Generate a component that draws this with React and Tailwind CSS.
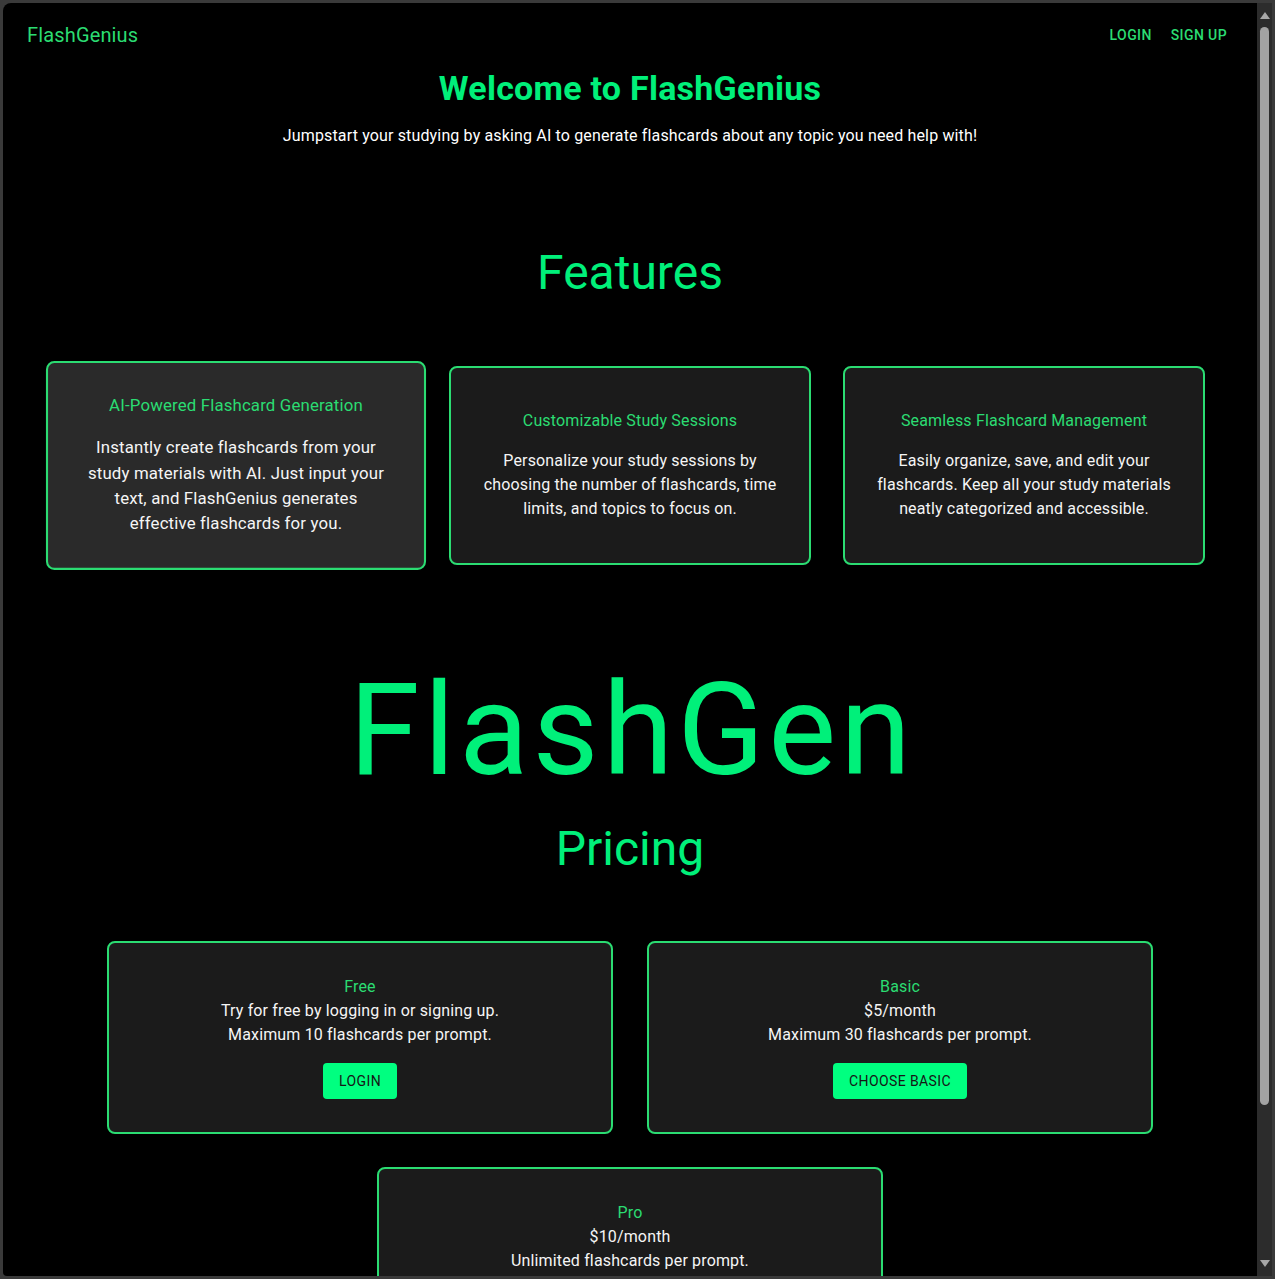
import React from "react";

const features = [
  {
    title: "AI-Powered Flashcard Generation",
    body: "Instantly create flashcards from your study materials with AI. Just input your text, and FlashGenius generates effective flashcards for you.",
    active: true,
  },
  {
    title: "Customizable Study Sessions",
    body: "Personalize your study sessions by choosing the number of flashcards, time limits, and topics to focus on.",
  },
  {
    title: "Seamless Flashcard Management",
    body: "Easily organize, save, and edit your flashcards. Keep all your study materials neatly categorized and accessible.",
  },
];

const plans = [
  { name: "Free", lines: ["Try for free by logging in or signing up.", "Maximum 10 flashcards per prompt."], cta: "Login" },
  { name: "Basic", lines: ["$5/month", "Maximum 30 flashcards per prompt."], cta: "Choose Basic" },
  { name: "Pro", lines: ["$10/month", "Unlimited flashcards per prompt."], cta: "Choose Pro" },
];

const FeatureCard = ({ title, body, active }) => (
  <div
    className={`h-[199px] w-[362px] rounded-lg border-2 border-[#2bdc72] px-8 pb-[2px] flex flex-col justify-center text-center ${
      active ? "bg-[#2a2a2a] scale-105" : "bg-[#1b1b1b]"
    }`}
  >
    <h3 className="text-base leading-6 tracking-[0.15px] text-[#2bdc72]">{title}</h3>
    <p className="mt-4 text-base leading-6 tracking-[0.15px] text-[#f5f5f5]">{body}</p>
  </div>
);

const PlanCard = ({ name, lines, cta }) => (
  <div className="w-[506px] shrink-0 rounded-lg border-2 border-[#2bdc72] bg-[#1b1b1b] pt-8 pb-[33px] flex flex-col items-center text-center">
    <h3 className="text-base leading-6 tracking-[0.15px] text-[#2bdc72]">{name}</h3>
    {lines.map((l) => (
      <p key={l} className="text-base leading-6 tracking-[0.15px] text-[#f5f5f5]">
        {l}
      </p>
    ))}
    <button
      type="button"
      className="mt-4 h-9 min-w-[64px] rounded bg-[#00ff80] px-4 text-sm uppercase tracking-[0.4px] text-[#161616]"
    >
      {cta}
    </button>
  </div>
);

const Scrollbar = () => (
  <div className="w-[15px] shrink-0 bg-[#2c2c2c] flex flex-col items-center">
    <div className="mt-[9px] h-0 w-0 border-x-[5px] border-b-[7px] border-x-transparent border-b-[#a8a8a8]" />
    <div className="mt-[8px] h-[1078px] w-[9px] rounded-full bg-[#a3a3a3]" />
    <div className="mt-auto mb-[9px] h-0 w-0 border-x-[5px] border-t-[7px] border-x-transparent border-t-[#a8a8a8]" />
  </div>
);

export default function App() {
  return (
    <div className="h-[1279px] w-full overflow-hidden bg-[#3a3a3a] p-[3px] flex">
      <div className="flex-1 flex overflow-hidden rounded-tl-lg rounded-bl-sm bg-black">
        <main className="flex-1 overflow-hidden font-['Roboto',sans-serif] text-white">
          <nav className="h-16 pl-6 pr-[22px] flex items-center justify-between">
            <span className="text-xl tracking-[0.15px] text-[#2bdc72]">FlashGenius</span>
            <div className="flex items-center">
              <button type="button" className="min-w-[64px] px-2 py-[6px] text-sm font-medium uppercase tracking-[0.4px] text-[#2bdc72]">
                Login
              </button>
              <button type="button" className="min-w-[64px] px-2 py-[6px] text-sm font-medium uppercase tracking-[0.4px] text-[#2bdc72]">
                Sign Up
              </button>
            </div>
          </nav>

          <h1 className="text-center text-[34px] font-bold leading-[42px] tracking-[0.25px] text-[#00f07a]">
            Welcome to FlashGenius
          </h1>
          <p className="mt-[15px] text-center text-base leading-6 tracking-[0.15px]">
            Jumpstart your studying by asking AI to generate flashcards about any topic you need help with!
          </p>

          <h2 className="mt-[97px] text-center text-[48px] leading-[56px] text-[#00f07a]">Features</h2>
          <div className="mt-[65px] flex justify-center gap-8">
            {features.map((f) => (
              <FeatureCard key={f.title} {...f} />
            ))}
          </div>

          <div className="mt-[101px] pl-1 text-center text-[128px] leading-none tracking-[4px] text-[#00f07a]">FlashGen</div>
          <h2 className="mt-[27px] text-center text-[48px] leading-[56px] text-[#00f07a]">Pricing</h2>

          <div className="mx-auto mt-[64px] flex w-[1046px] flex-wrap justify-center gap-x-[34px] gap-y-[33px]">
            {plans.map((p) => (
              <PlanCard key={p.name} {...p} />
            ))}
          </div>
        </main>
        <Scrollbar />
      </div>
    </div>
  );
}
